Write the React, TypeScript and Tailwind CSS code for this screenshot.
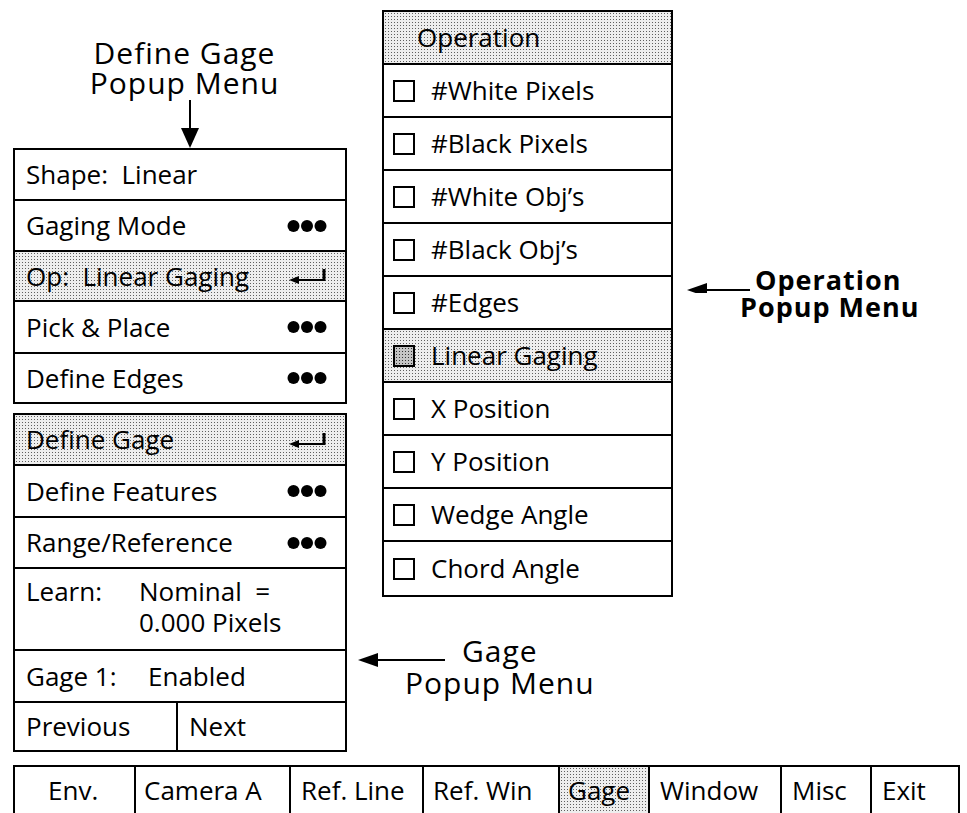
import React from "react";

const shade =
   "bg-[#eeeeee] bg-[radial-gradient(circle,#5f5f5f_0.8px,transparent_1px)] bg-[length:3px_3px]";

const Dots = () => (
   <svg width="40" height="14" viewBox="0 0 40 14" className="shrink-0">
      <circle cx="6.5" cy="7" r="6" fill="#000" />
      <circle cx="20" cy="7" r="6" fill="#000" />
      <circle cx="33.5" cy="7" r="6" fill="#000" />
   </svg>
);

const Enter = () => (
   <svg width="38" height="18" viewBox="0 0 38 18" className="shrink-0">
      <polygon points="0,13 10,9 10,17" fill="#000" />
      <line x1="9" y1="13" x2="35" y2="13" stroke="#000" strokeWidth="2" />
      <line x1="35" y1="14" x2="35" y2="2" stroke="#000" strokeWidth="3" />
   </svg>
);

const LeftArrow = ({ width, h, y }: { width: number; h: number; y: number }) => (
   <svg width={width} height={h} viewBox={`0 0 ${width} ${h}`} className="shrink-0">
      <polygon points={`0,${y} 20,${y - 7} 20,${y + 7}`} fill="#000" />
      <line x1="18" y1={y} x2={width} y2={y} stroke="#000" strokeWidth="2" />
   </svg>
);

const Row = ({
   children,
   shaded,
   right,
   last,
   h = "h-[51px]",
}: {
   children: React.ReactNode;
   shaded?: boolean;
   right?: React.ReactNode;
   last?: boolean;
   h?: string;
}) => (
   <div
      className={`${h} flex items-center justify-between pl-[11px] pr-[18px] whitespace-pre ${
         last ? "" : "border-b-2 border-black"
      } ${shaded ? shade : ""}`}>
      <span>{children}</span>
      {right}
   </div>
);

const opItems = [
   "#White Pixels",
   "#Black Pixels",
   "#White Obj’s",
   "#Black Obj’s",
   "#Edges",
   "Linear Gaging",
   "X Position",
   "Y Position",
   "Wedge Angle",
   "Chord Angle",
];

const tabs = [
   { label: "Env.", w: "w-[121px]", pad: "pl-[33px]" },
   { label: "Camera A", w: "w-[155px]", pad: "pl-[8px]" },
   { label: "Ref. Line", w: "w-[133px]", pad: "pl-[10px]" },
   { label: "Ref. Win", w: "w-[136px]", pad: "pl-[9px]" },
   { label: "Gage", w: "w-[90px]", pad: "pl-[8px]", active: true },
   { label: "Window", w: "w-[132px]", pad: "pl-[10px]" },
   { label: "Misc", w: "w-[90px]", pad: "pl-[10px]" },
   { label: "Exit", w: "w-[90px]", pad: "pl-[10px]" },
];

export default function App() {
   return (
      <div className="w-[967px] h-[813px] overflow-hidden bg-white text-black font-['Open_Sans',sans-serif] flex flex-col">
         <div className="flex h-[765px] shrink-0">
            {/* define gage column */}
            <div className="ml-[13px] w-[334px] flex flex-col text-[26px]">
               <div className="pt-[38px] text-[30px] leading-[30px] tracking-[1px] text-center pl-[9px]">
                  <div>Define Gage</div>
                  <div>Popup Menu</div>
               </div>
               <div className="h-[50px] flex justify-center pl-[20px]">
                  <svg width="20" height="50" viewBox="0 0 20 50">
                     <line x1="10" y1="2" x2="10" y2="32" stroke="#000" strokeWidth="2" />
                     <polygon points="1,30 19,30 10,50" fill="#000" />
                  </svg>
               </div>
               <div className="border-2 border-black">
                  <Row>Shape:  Linear</Row>
                  <Row right={<Dots />}>Gaging Mode</Row>
                  <Row shaded right={<Enter />} h="h-[50px]">
                     Op:  Linear Gaging
                  </Row>
                  <Row right={<Dots />} h="h-[52px]">
                     Pick &amp; Place
                  </Row>
                  <Row last right={<Dots />} h="h-[48px]">
                     Define Edges
                  </Row>
               </div>
               <div className="mt-[9px] border-2 border-black">
                  <Row shaded right={<Enter />}>
                     Define Gage
                  </Row>
                  <Row right={<Dots />} h="h-[52px]">
                     Define Features
                  </Row>
                  <Row right={<Dots />}>Range/Reference</Row>
                  <div className="h-[82px] border-b-2 border-black pl-[11px] pt-[7px] leading-[31px] flex">
                     <span className="w-[113px]">Learn:</span>
                     <div className="flex flex-col">
                        <span>Nominal&nbsp; =</span>
                        <span>0.000 Pixels</span>
                     </div>
                  </div>
                  <div className="h-[52px] border-b-2 border-black pl-[11px] flex items-center">
                     <span className="w-[122px]">Gage 1:</span>
                     <span>Enabled</span>
                  </div>
                  <div className="h-[47px] flex">
                     <div className="w-[163px] border-r-2 border-black pl-[11px] flex items-center">
                        Previous
                     </div>
                     <div className="pl-[11px] flex items-center">Next</div>
                  </div>
               </div>
            </div>

            {/* operation column */}
            <div className="w-[326px] flex flex-col text-[26px]">
               <div className="mt-[10px] ml-[35px] w-[291px] border-2 border-black">
                  <div className={`h-[53px] border-b-2 border-black flex items-center pl-[33px] ${shade}`}>
                     Operation
                  </div>
                  {opItems.map((item, i) => {
                     const on = item === "Linear Gaging";
                     return (
                        <div
                           key={item}
                           className={`h-[53px] flex items-center pl-[9px] ${
                              i < opItems.length - 1 ? "border-b-2 border-black" : ""
                           } ${on ? shade : ""}`}>
                           <span
                              className={`w-[22px] h-[22px] border-2 border-black shrink-0 ${
                                 on
                                    ? "bg-[#c4c4c4] bg-[radial-gradient(circle,#333_0.8px,transparent_1px)] bg-[length:3px_3px]"
                                    : "bg-white"
                              }`}
                           />
                           <span className="ml-[16px]">{item}</span>
                        </div>
                     );
                  })}
               </div>
               <div className="mt-[38px] ml-[11px] text-[30px] leading-[32px] tracking-[1px]">
                  <div className="flex items-start">
                     <LeftArrow width={87} h={32} y={25} />
                     <span className="ml-[17px]">Gage</span>
                  </div>
                  <div className="ml-[47px]">Popup Menu</div>
               </div>
            </div>

            {/* operation label */}
            <div className="flex flex-col pt-[266px] text-[27px] font-bold leading-[27px] tracking-[1px]">
               <div className="flex items-start ml-[14px]">
                  <LeftArrow width={63} h={27} y={24} />
                  <span className="ml-[5px]">Operation</span>
               </div>
               <div className="ml-[67px]">Popup Menu</div>
            </div>
         </div>

         {/* tab bar */}
         <div className="ml-[13px] w-[947px] h-[60px] shrink-0 border-t-2 border-l-2 border-r-2 border-black flex text-[26px]">
            {tabs.map((t, i) => (
               <div
                  key={t.label}
                  className={`${t.w} ${t.pad} pt-[7px] leading-[32px] ${
                     i < tabs.length - 1 ? "border-r-2 border-black" : "flex-1"
                  } ${t.active ? shade : ""}`}>
                  {t.label}
               </div>
            ))}
         </div>
      </div>
   );
}
